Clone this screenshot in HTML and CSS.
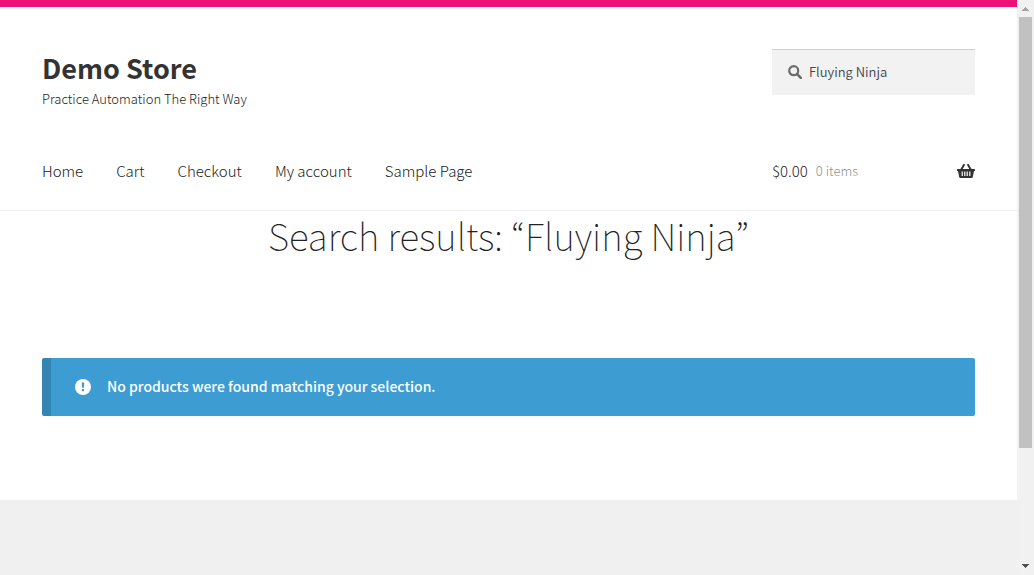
FILE: index.html
```html
<!DOCTYPE html>
<html lang="en">
<head>
<meta charset="utf-8">
<meta name="viewport" content="width=device-width, initial-scale=1">
<title>Search results – Demo Store</title>
<link rel="stylesheet" href="styles.css">
</head>
<body>
<div class="viewport">
  <div class="page">
    <header class="site-header">
      <div class="masthead">
        <div class="branding">
          <a class="site-title" href="#">Demo Store</a>
          <p class="tagline">Practice Automation The Right Way</p>
        </div>
        <form class="search" role="search">
          <svg class="search-icon" viewBox="0 0 14 14" aria-hidden="true"><circle cx="5.7" cy="5.7" r="4.5" fill="none" stroke="currentColor" stroke-width="2.2"/><path d="M9 9l3.8 3.8" stroke="currentColor" stroke-width="2.5" stroke-linecap="round"/></svg>
          <input class="search-field" type="search" aria-label="Search for" value="Fluying Ninja">
        </form>
      </div>
      <div class="nav-row">
        <nav class="main-nav">
          <a href="#">Home</a>
          <a href="#">Cart</a>
          <a href="#">Checkout</a>
          <a href="#">My account</a>
          <a href="#">Sample Page</a>
        </nav>
        <a class="cart" href="#" title="View your shopping cart">
          <span class="amount">$0.00</span>
          <span class="count">0 items</span>
          <svg class="cart-icon" viewBox="0 0 18 16" aria-hidden="true"><path d="M4 7L7 1.800M14 7L11 1.800" stroke="currentColor" stroke-width="1.9" stroke-linecap="round"/><path fill="currentColor" fill-rule="evenodd" d="M.6 6h16.800q.6 0 .6.6v.8q0 .6-.6.6h-.4l-1.200 6q-.2 1-1.200 1H3.400q-1 0-1.200-1L1 8H.6Q0 8 0 7.400v-.8Q0 6 .6 6zM4.600 8.600v4.400h1.200V8.600zM7.200 8.600v4.400h1.200V8.600zM9.600 8.600v4.400h1.200V8.600zM12.200 8.600v4.400h1.200V8.600z"/></svg>
        </a>
      </div>
    </header>
    <main class="content">
      <h1 class="page-title">Search results: “Fluying Ninja”</h1>
      <p class="notice" role="status">
        <svg class="notice-icon" viewBox="0 0 16 18" aria-hidden="true"><circle cx="8" cy="10" r="8" fill="#fff"/><path d="M6.700 5.500h2.600l-.4 5.200H7.100zM6.900 12h2.200v2.200H6.900z" fill="#3d9cd2"/></svg>
        <span>No products were found matching your selection.</span>
      </p>
    </main>
    <footer class="site-footer"></footer>
  </div>
  <div class="scrollbar" aria-hidden="true">
    <svg class="arrow arrow-up" viewBox="0 0 7 4"><path d="M3 0h1v1h1v1h1v1h1v1H0V3h1V2h1V1h1z"/></svg>
    <div class="track"><div class="thumb"></div></div>
    <svg class="arrow arrow-down" viewBox="0 0 7 4"><path d="M0 0h7v1H6v1H5v1H4v1H3V3H2V2H1V1H0z"/></svg>
  </div>
</div>
</body>
</html>
```
FILE: styles.css
```css
* {
  box-sizing: border-box;
}

body {
  margin: 0;
  background: #fff;
  color: #43454b;
  font-family: "Source Sans Pro", "Noto Sans CJK KR", "Open Sans", sans-serif;
  font-size: 14px;
  line-height: 24px;
}

a {
  color: #222;
  text-decoration: none;
}

.viewport {
  display: flex;
  height: 100vh;
}

.page {
  display: flex;
  flex: 1;
  flex-direction: column;
  min-width: 0;
  border-top: 7px solid #eb1177;
}

.site-header {
  padding: 42px 42px 0;
  border-bottom: 1px solid #f0f0f0;
}

.masthead,
.nav-row {
  display: flex;
  justify-content: space-between;
}

.site-title {
  display: block;
  color: #333;
  font-size: 27px;
  font-weight: 700;
  line-height: 38px;
}

.tagline {
  margin: 0;
  color: #222;
  font-size: 13px;
  font-weight: 300;
}

.search {
  display: flex;
  align-items: center;
  gap: 7px;
  width: 203px;
  height: 46px;
  padding: 0 16px 2px;
  border-top: 1px solid #d0d0d0;
  background: #f2f2f2;
}

.search-icon {
  flex: none;
  width: 14px;
  height: 14px;
  color: #6c6c6c;
}

.search-field {
  flex: 1;
  min-width: 0;
  padding: 0;
  border: 0;
  outline: 0;
  appearance: none;
  background: transparent;
  color: #43454b;
  font: inherit;
  font-size: 13px;
  font-weight: 350;
}

.nav-row {
  align-items: center;
  padding: 48px 0 27px;
}

.main-nav {
  display: flex;
  gap: 33px;
  font-size: 15px;
  font-weight: 300;
}

.cart {
  display: flex;
  align-items: center;
  gap: 8px;
  width: 203px;
  font-size: 15px;
  font-weight: 300;
}

.count {
  color: #909090;
  font-size: 13px;
}

.cart-icon {
  width: 18px;
  height: 16px;
  margin-left: auto;
  color: #333;
  fill: none;
}

.content {
  flex: 1;
  padding: 0 42px;
}

.page-title {
  margin: 0 0 98px;
  font-size: 37px;
  font-weight: 100;
  line-height: 49px;
  text-align: center;
  color: #222;
}

.notice {
  display: flex;
  align-items: center;
  gap: 16px;
  margin: 0;
  padding: 16px 24px 18px;
  border-left: 9px solid #3585b4;
  border-radius: 2px;
  background: #3d9cd2;
  color: #fff;
  font-weight: 500;
}

.notice-icon {
  flex: none;
  width: 16px;
  height: 18px;
}

.site-footer {
  height: 75px;
  background: #f0f0f0;
}

.scrollbar {
  display: flex;
  flex-direction: column;
  align-items: center;
  width: 17px;
  padding: 7px 0;
  background: #f1f1f1;
}

.arrow {
  width: 7px;
  height: 4px;
}

.arrow-up {
  fill: #a3a3a3;
}

.arrow-down {
  fill: #505050;
}

.track {
  flex: 1;
  width: 13px;
  padding: 6px 0;
}

.thumb {
  height: 79.7%;
  background: #c1c1c1;
}
```
